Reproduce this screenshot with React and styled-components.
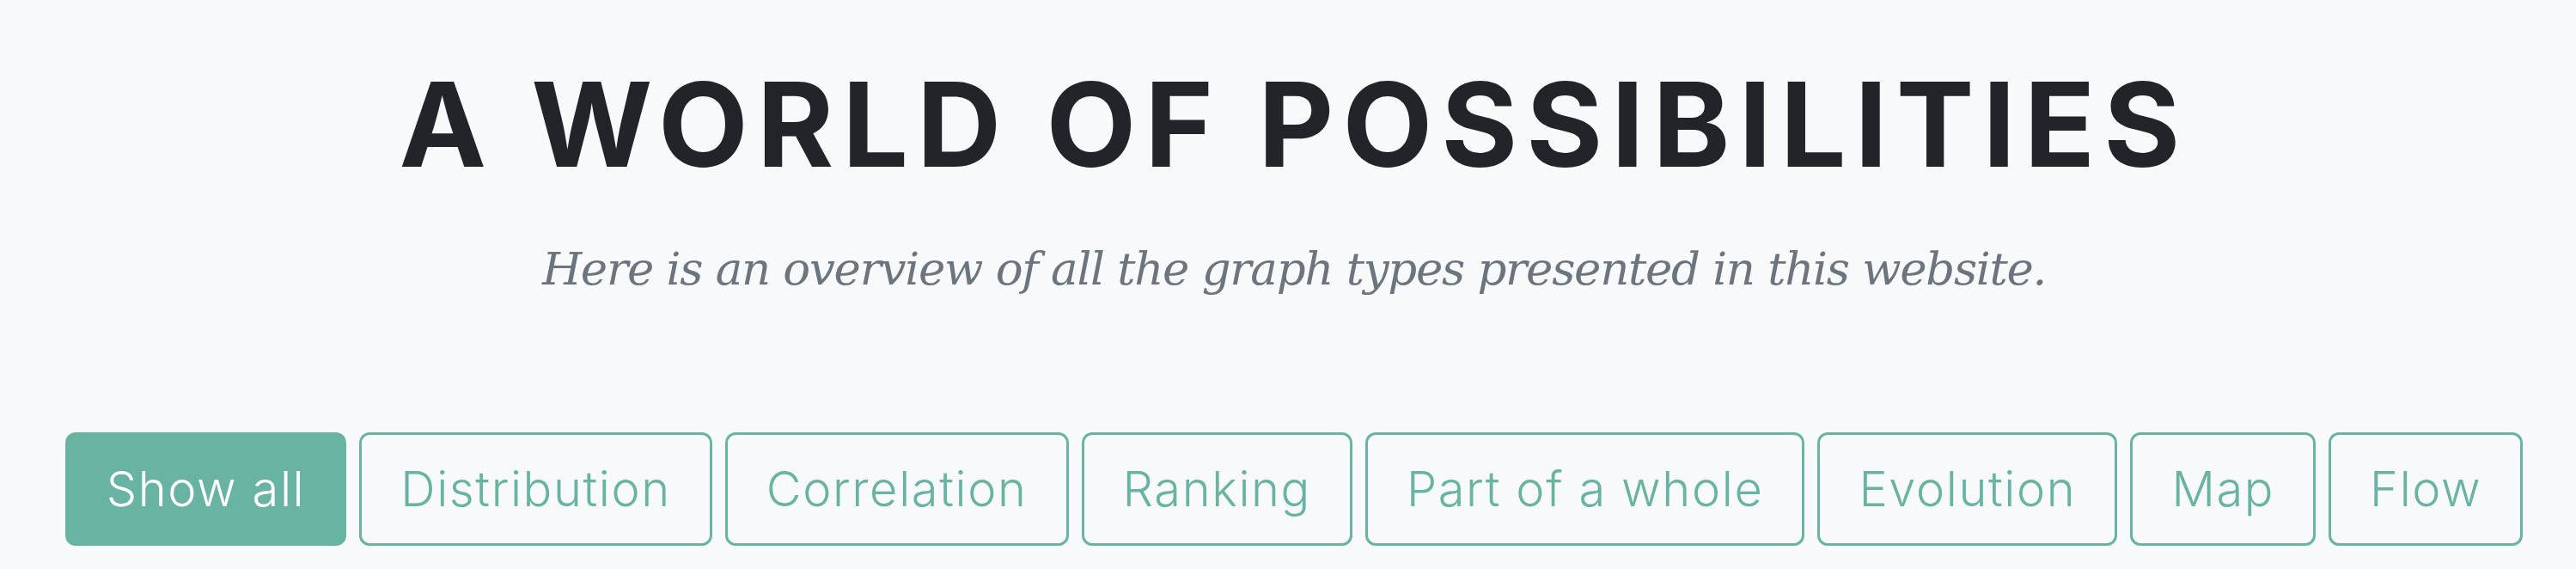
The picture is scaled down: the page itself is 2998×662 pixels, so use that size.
import styled, { createGlobalStyle } from 'styled-components';

const FILTERS = [
  'Show all',
  'Distribution',
  'Correlation',
  'Ranking',
  'Part of a whole',
  'Evolution',
  'Map',
  'Flow',
];

const GlobalStyle = createGlobalStyle`
  html, body {
    margin: 0;
    padding: 0;
    background: #f8f9fa;
  }
`;

const Page = styled.main`
  display: flex;
  flex-direction: column;
  align-items: center;
  height: 662px;
  padding-left: 14px;
  box-sizing: border-box;
  background: #f8f9fa;
  overflow: hidden;
`;

const Title = styled.h1`
  margin: 70px 0 0;
  font-family: Inter, 'Liberation Sans', sans-serif;
  font-weight: 700;
  font-size: 136px;
  line-height: 150px;
  letter-spacing: 10px;
  color: #212529;
`;

const Subtitle = styled.p`
  margin: 58px 0 0;
  font-family: 'DejaVu Serif', 'Liberation Serif', serif;
  font-style: italic;
  font-size: 53px;
  line-height: 70px;
  letter-spacing: -1.3px;
  color: #6c757d;
`;

const FilterRow = styled.nav`
  display: flex;
  gap: 15px;
  margin-top: 155px;
`;

const FilterButton = styled.button`
  height: 132px;
  padding: 0 45px;
  border: 3px solid #69b3a2;
  border-radius: 12px;
  background: ${(p) => (p.$active ? '#69b3a2' : 'transparent')};
  color: ${(p) => (p.$active ? '#ffffff' : '#69b3a2')};
  font-family: Inter, 'Liberation Sans', sans-serif;
  font-weight: 300;
  font-size: 56px;
  letter-spacing: 1.6px;
  cursor: pointer;
`;

export default function App() {
  return (
    <>
      <GlobalStyle />
      <Page>
        <Title>A WORLD OF POSSIBILITIES</Title>
        <Subtitle>Here is an overview of all the graph types presented in this website.</Subtitle>
        <FilterRow>
          {FILTERS.map((label, i) => (
            <FilterButton key={label} type="button" $active={i === 0}>
              {label}
            </FilterButton>
          ))}
        </FilterRow>
      </Page>
    </>
  );
}
